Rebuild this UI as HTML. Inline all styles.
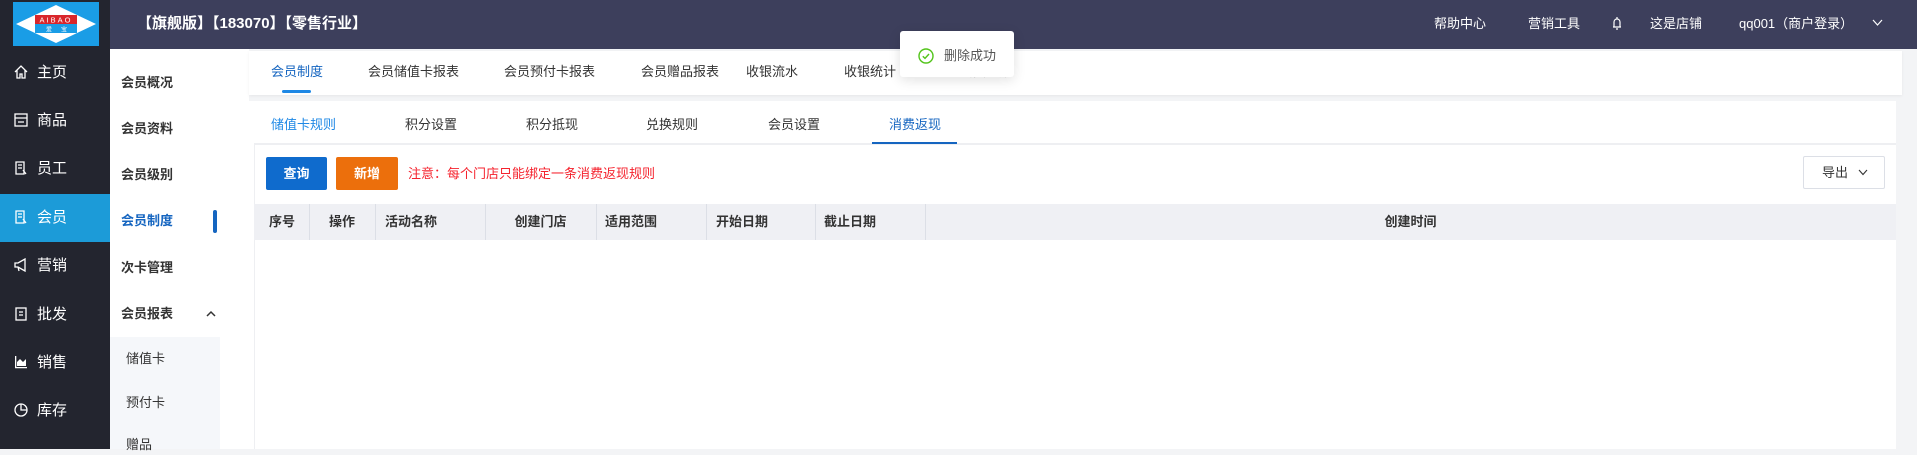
<!DOCTYPE html>
<html><head><meta charset="utf-8">
<style>
*{margin:0;padding:0;box-sizing:border-box}
body{width:1917px;height:449px;overflow:hidden;background:#f3f4f6;font-family:"Liberation Sans","Noto Sans CJK SC",sans-serif;position:relative;color:#333}
.abs{position:absolute}
.hdr{left:0;top:0;width:1917px;height:49px;background:#3d3f5c}
.side{left:0;top:49px;width:110px;height:400px;background:#23252f}
.si{position:absolute;left:0;width:110px;height:48px;color:#fff;font-size:15px;line-height:48px;padding-left:37px}
.si svg{position:absolute;left:14px;top:16px}
.sub{left:110px;top:49px;width:139px;height:400px;background:#fff}
.sm{position:absolute;left:11px;font-size:13px;font-weight:bold;color:#333;line-height:20px}
.t{position:absolute;font-size:13px;line-height:18px;white-space:nowrap}
.th{position:absolute;top:204px;height:36px;line-height:36px;font-size:13px;font-weight:bold;color:#333}
.vl{position:absolute;top:204px;width:1px;height:36px;background:#dcdfe6}
</style></head><body>
<div class="abs hdr"></div>
<div class="abs" style="left:0;top:0;width:110px;height:49px;background:#23252f"></div>
<svg class="abs" style="left:13px;top:2px" width="86" height="44" viewBox="0 0 86 44">
<rect width="86" height="44" fill="#1a9de6"/>
<polygon points="43,3 83,22 43,41 3,22" fill="#fff"/>
<rect x="22" y="13" width="42" height="9" fill="#d9262b"/>
<text x="43" y="20.5" font-size="7.5" fill="#fff" text-anchor="middle" font-family="Liberation Sans" letter-spacing="2">AIBAO</text>
<rect x="22" y="22" width="42" height="9" fill="#1a9de6"/>
<text x="33" y="29.5" font-size="6" fill="#fff" font-family="Noto Sans CJK SC">爱</text>
<text x="48" y="29.5" font-size="6" fill="#fff" font-family="Noto Sans CJK SC">宝</text>
</svg>
<div class="t" style="left:137px;top:14px;font-size:15px;font-weight:bold;color:#fff;line-height:20px">【旗舰版】【183070】【零售行业】</div>
<div class="t" style="left:1434px;top:14px;color:#fff;font-size:13px;line-height:20px">帮助中心</div>
<div class="t" style="left:1528px;top:14px;color:#fff;font-size:13px;line-height:20px">营销工具</div>
<svg class="abs" style="left:1611px;top:16px" width="12" height="15" viewBox="0 0 12 15" fill="none" stroke="#fff" stroke-width="1.2"><path d="M3 11V6a3 3 0 0 1 6 0v5M2 11h8M6 1v2M5 13h2"/></svg>
<div class="t" style="left:1650px;top:14px;color:#fff;font-size:13px;line-height:20px">这是店铺</div>
<div class="t" style="left:1739px;top:14px;color:#fff;font-size:13px;line-height:20px">qq001（商户登录）</div>
<svg class="abs" style="left:1872px;top:19px" width="11" height="8" viewBox="0 0 11 8" fill="none" stroke="#fff" stroke-width="1.2"><path d="M1 1l4.5 5L10 1"/></svg>

<div class="abs side">
<div class="si" style="top:0"><svg width="14" height="14" viewBox="0 0 14 14" fill="none" stroke="#fff" stroke-width="1.3"><path d="M1 7L7 1l6 6M3 5v8h3V9h2v4h3V5"/></svg>主页</div>
<div class="si" style="top:48px"><svg width="14" height="14" viewBox="0 0 14 14" fill="none" stroke="#fff" stroke-width="1.3"><rect x="1" y="1" width="12" height="12"/><path d="M1 5h12M4 9h6"/></svg>商品</div>
<div class="si" style="top:96px"><svg width="14" height="14" viewBox="0 0 14 14" fill="none" stroke="#fff" stroke-width="1.3"><path d="M2 1h8v12H2zM4 4h4M4 7h4M9 9l3 4"/></svg>员工</div>
<div class="si" style="top:145px;background:#1c9bd8"><svg width="14" height="14" viewBox="0 0 14 14" fill="none" stroke="#fff" stroke-width="1.3"><path d="M2 1h8v12H2zM4 4h4M4 7h4M9 9l3 4"/></svg>会员</div>
<div class="si" style="top:193px"><svg width="14" height="14" viewBox="0 0 14 14" fill="none" stroke="#fff" stroke-width="1.3"><path d="M1 5h3l7-4v12L4 9H1zM4 9l1 4"/></svg>营销</div>
<div class="si" style="top:242px"><svg width="14" height="14" viewBox="0 0 14 14" fill="none" stroke="#fff" stroke-width="1.3"><rect x="2" y="1" width="10" height="12"/><path d="M5 5h4M5 8h4"/></svg>批发</div>
<div class="si" style="top:290px"><svg width="14" height="14" viewBox="0 0 14 14" fill="#fff"><path d="M1 1h1.3v11H13v1.3H1z"/><path d="M3 11V7l3-3 3 3 3-3v7z"/></svg>销售</div>
<div class="si" style="top:338px"><svg width="14" height="14" viewBox="0 0 14 14" fill="none" stroke="#fff" stroke-width="1.3"><circle cx="7" cy="7" r="6"/><path d="M7 1v6h6"/></svg>库存</div>
</div>

<div class="abs sub">
<div class="abs" style="left:0;top:288px;width:110px;height:112px;background:#f5f7fa"></div>
<div class="sm" style="top:24px">会员概况</div>
<div class="sm" style="top:70px">会员资料</div>
<div class="sm" style="top:116px">会员级别</div>
<div class="sm" style="top:162px;color:#1565c0">会员制度</div>
<div class="abs" style="left:103px;top:161px;width:4px;height:23px;background:#1565c0;border-radius:2px"></div>
<div class="sm" style="top:209px">次卡管理</div>
<div class="sm" style="top:255px">会员报表</div>
<svg class="abs" style="left:96px;top:261px" width="10" height="7" viewBox="0 0 10 7" fill="none" stroke="#333" stroke-width="1.5"><path d="M1 6l4-4 4 4"/></svg>
<div class="sm" style="top:300px;left:16px;font-weight:normal">储值卡</div>
<div class="sm" style="top:344px;left:16px;font-weight:normal">预付卡</div>
<div class="sm" style="top:386px;left:16px;font-weight:normal">赠品</div>
</div>

<div class="abs" style="left:249px;top:51px;width:1653px;height:44px;background:#fff;box-shadow:0 1px 3px rgba(0,0,0,.06)"></div>
<div class="t" style="left:271px;top:63px;color:#1565c0">会员制度</div>
<div class="abs" style="left:282px;top:90px;width:29px;height:3px;background:#1e88e5;border-radius:2px"></div>
<div class="t" style="left:368px;top:63px">会员储值卡报表</div>
<div class="t" style="left:504px;top:63px">会员预付卡报表</div>
<div class="t" style="left:641px;top:63px">会员赠品报表</div>
<div class="t" style="left:746px;top:63px">收银流水</div>
<div class="t" style="left:844px;top:63px">收银统计</div>
<div class="t" style="left:960px;top:63px">会员对账</div>

<div class="abs" style="left:249px;top:101px;width:1647px;height:348px;background:#fff"></div>
<div class="t" style="left:271px;top:116px;color:#1e88e5">储值卡规则</div>
<div class="t" style="left:405px;top:116px">积分设置</div>
<div class="t" style="left:526px;top:116px">积分抵现</div>
<div class="t" style="left:646px;top:116px">兑换规则</div>
<div class="t" style="left:768px;top:116px">会员设置</div>
<div class="t" style="left:889px;top:116px;color:#1565c0">消费返现</div>
<div class="abs" style="left:254px;top:143px;width:1642px;height:2px;background:#eeeff2"></div>
<div class="abs" style="left:872px;top:142px;width:85px;height:2px;background:#1565c0"></div>
<div class="abs" style="left:254px;top:145px;width:1px;height:304px;background:#eeeff2"></div>

<div class="abs" style="left:266px;top:157px;width:61px;height:33px;background:#0f6bcd;border-radius:2px;color:#fff;font-size:13px;font-weight:bold;line-height:33px;text-align:center">查询</div>
<div class="abs" style="left:336px;top:157px;width:62px;height:33px;background:#ec6f0c;border-radius:2px;color:#fff;font-size:13px;font-weight:bold;line-height:33px;text-align:center">新增</div>
<div class="t" style="left:408px;top:165px;color:#f5222d">注意：每个门店只能绑定一条消费返现规则</div>
<div class="abs" style="left:1803px;top:156px;width:82px;height:33px;border:1px solid #dcdfe6;border-radius:2px;background:#fff"></div>
<div class="t" style="left:1822px;top:164px">导出</div>
<svg class="abs" style="left:1858px;top:169px" width="10" height="7" viewBox="0 0 10 7" fill="none" stroke="#333" stroke-width="1.1"><path d="M1 1l4 4.5L9 1"/></svg>

<div class="abs" style="left:254px;top:204px;width:1642px;height:36px;background:#eff0f4"></div>
<div class="vl" style="left:309px"></div><div class="vl" style="left:375px"></div><div class="vl" style="left:485px"></div><div class="vl" style="left:596px"></div><div class="vl" style="left:706px"></div><div class="vl" style="left:815px"></div><div class="vl" style="left:925px"></div>
<div class="th" style="left:269px">序号</div>
<div class="th" style="left:329px">操作</div>
<div class="th" style="left:385px">活动名称</div>
<div class="th" style="left:485px;width:111px;text-align:center">创建门店</div>
<div class="th" style="left:605px">适用范围</div>
<div class="th" style="left:716px">开始日期</div>
<div class="th" style="left:824px">截止日期</div>
<div class="th" style="left:925px;width:971px;text-align:center">创建时间</div>

<div class="abs" style="left:900px;top:31px;width:114px;height:46px;background:#fff;border-radius:3px;box-shadow:0 3px 12px rgba(0,0,0,.12)"></div>
<svg class="abs" style="left:918px;top:48px" width="16" height="16" viewBox="0 0 16 16" fill="none" stroke="#52c41a" stroke-width="1.4"><circle cx="8" cy="8" r="7"/><path d="M4.8 8.2l2.2 2.2 4-4.4"/></svg>
<div class="t" style="left:944px;top:47px;color:#555">删除成功</div>
</body></html>
